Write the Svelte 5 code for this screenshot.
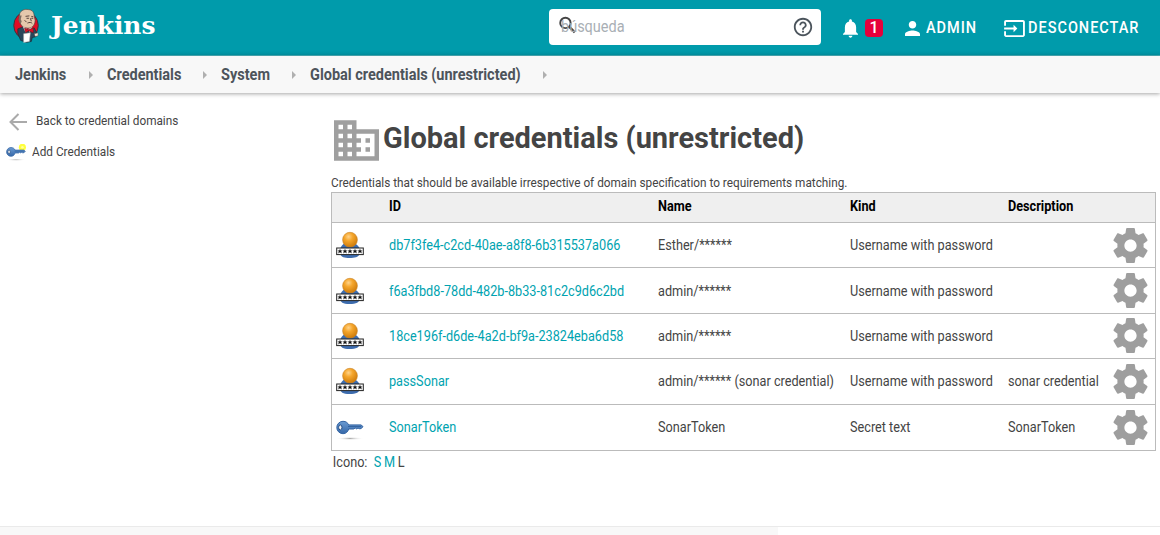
<script>
  const crumbs = [
    { label: 'Jenkins', width: 91.5 },
    { label: 'Credentials', width: 114.5 },
    { label: 'System', width: 89 },
    { label: 'Global credentials (unrestricted)', width: 245 }
  ];
  const rows = [
    { id: 'db7f3fe4-c2cd-40ae-a8f8-6b315537a066', name: 'Esther/******', kind: 'Username with password', description: '', icon: 'user' },
    { id: 'f6a3fbd8-78dd-482b-8b33-81c2c9d6c2bd', name: 'admin/******', kind: 'Username with password', description: '', icon: 'user' },
    { id: '18ce196f-d6de-4a2d-bf9a-23824eba6d58', name: 'admin/******', kind: 'Username with password', description: '', icon: 'user' },
    { id: 'passSonar', name: 'admin/****** (sonar credential)', kind: 'Username with password', description: 'sonar credential', icon: 'user' },
    { id: 'SonarToken', name: 'SonarToken', kind: 'Secret text', description: 'SonarToken', icon: 'key' }
  ];
</script>

{#snippet key(fresh)}
  <svg class="key" class:small={fresh} viewBox="0 0 28 24">
    <defs>
      <linearGradient id="keyfill" x2="0" y2="1"><stop stop-color="#6b9bd2" /><stop offset="1" stop-color="#3567a8" /></linearGradient>
      <radialGradient id="keyshade"><stop stop-color="#aaa" /><stop offset="1" stop-color="#fff" stop-opacity="0" /></radialGradient>
    </defs>
    <ellipse cx="14" cy="21.5" rx="14" ry="1.7" fill="url(#keyshade)" />
    {#if fresh}<circle cx="23" cy="4" r="5" fill="#ffff3d" /><circle cx="23" cy="4" r="1.8" fill="#ffffa0" />{/if}
    <path d="M7 4.3c3 0 4.8 1.5 5.7 3.6H25l2 1.7-1.8 2-2 .1-1.2-.7-1.3.9-1.5-.9-1.5 1h-5C12 14.700 10 16.700 7 16.700A6.200 6.200 0 0 1 7 4.300z" fill="url(#keyfill)" stroke="#3465a4" />
    <path d="M12 9.500h13" stroke="#3464a0" />
    <ellipse cx="4.300" cy="10.400" rx="1.700" ry="2.500" fill="#f5f5f5" stroke="#285086" />
  </svg>
{/snippet}

<header>
  <div class="brand">
    <svg class="butler" viewBox="0 0 28 36">
      <ellipse cx="13.500" cy="17.500" rx="12.700" ry="14" fill="#e10d25" stroke="#303944" />
      <path d="M5 21l5-2 6 3 6-2 2 4v5l-4 1-1 4-5 1-6-2-3-7z" fill="#29465a" stroke="#1d2b35" stroke-width=".7" />
      <path d="M7 5c1-3 5-5 9-4 4 0 6 3 6 7l1 4c0 4-2 7-5 8-4 1-9-1-10-4L6 12z" fill="#e5c8ac" stroke="#4b4541" stroke-width=".7" />
      <path d="M7 7c-2 3-1 7 1 9l1-3-1-2 1-4z" fill="#7c6c60" />
      <path d="M13 8l4-.5M19 8l2 .5M14 10h2.500M19 10h2M18 10l1 3M15 15c2-1 4-1 5 .5M12 12l2 2" fill="none" stroke="#533f38" />
      <path d="M10 18l5 3-2 4zM20 19l-4 2 1 4z" fill="#e8e0da" />
      <path d="M12 20l4 2 5-2v5l-5-2-3 2z" fill="#e10d25" stroke="#701520" stroke-width=".6" />
      <path d="M11 26l7-1-1 9-6 1z" fill="#fff" stroke="#aaa" stroke-width=".5" />
      <path d="M22 26l4-1v3l-3 1z" fill="#f4e6dc" stroke="#50443d" stroke-width=".5" />
    </svg>
    <span class="wordmark">Jenkins</span>
  </div>
  <div class="search">
    <span class="placeholder narrow">búsqueda</span>
    <svg class="lens" viewBox="0 0 18 18"><circle cx="6.800" cy="6.800" r="5.500" fill="none" stroke="#444" stroke-width="2" /><path d="M10.700 10.700l6 6" stroke="#444" stroke-width="2.600" /></svg>
    <svg class="help" viewBox="0 0 24 24"><path fill="#4b545c" d="M11 18h2v-2h-2v2zm1-16C6.480 2 2 6.480 2 12s4.480 10 10 10 10-4.480 10-10S17.520 2 12 2zm0 18c-4.410 0-8-3.590-8-8s3.590-8 8-8 8 3.590 8 8-3.590 8-8 8zm0-14c-2.210 0-4 1.790-4 4h2c0-1.100.9-2 2-2s2 .9 2 2c0 2-3 1.750-3 5h2c0-2.250 3-2.500 3-5 0-2.210-1.790-4-4-4z" /></svg>
  </div>
  <svg class="bell" viewBox="4 2.500 16 19.500"><path fill="#fff" d="M12 22c1.100 0 2-.9 2-2h-4c0 1.100.9 2 2 2zm6-6v-5c0-3.070-1.640-5.640-4.500-6.320V4c0-.83-.67-1.500-1.500-1.500s-1.500.67-1.500 1.500v.68C7.630 5.360 6 7.920 6 11v5l-2 2v1h16v-1l-2-2z" /></svg>
  <span class="badge">1</span>
  <svg class="person" viewBox="4 4 16 16"><path fill="#fff" d="M12 12c2.210 0 4-1.790 4-4s-1.790-4-4-4-4 1.790-4 4 1.790 4 4 4zm0 2c-2.670 0-8 1.340-8 4v2h16v-2c0-2.660-5.330-4-8-4z" /></svg>
  <span class="admin narrow">ADMIN</span>
  <svg class="exit" viewBox="1 3 22 18"><path fill="#fff" d="M21 3.010H3c-1.100 0-2 .9-2 2V9h2V4.990h18v14.030H3V15H1v4.010c0 1.100.9 1.980 2 1.980h18c1.100 0 2-.88 2-1.980v-14c0-1.110-.9-2-2-2zM11 16l4-4-4-4v3H1v2h10v3z" /></svg>
  <span class="logout narrow">DESCONECTAR</span>
</header>

<nav>
  {#each crumbs as crumb, i}
    <span class="crumb" style:width="{crumb.width}px"><span class="narrow">{crumb.label}</span>{#if i < 3}<i></i>{/if}</span>
  {/each}
  <i></i>
</nav>

<div class="body">
  <aside>
    <a class="back" href="#back"><svg viewBox="0 0 18 18"><path d="M18 9H2M9.500 1L1.500 9l8 8" fill="none" stroke="#aaa" stroke-width="2" /></svg><span class="narrow">Back to credential domains</span></a>
    <a class="add" href="#add">{@render key(true)}<span class="narrow">Add Credentials</span></a>
  </aside>
  <main>
    <h1>
      <svg viewBox="2 3 20 18"><path fill="#9f9f9f" d="M12 7V3H2v18h20V7H12zM6 19H4v-2h2v2zm0-4H4v-2h2v2zm0-4H4V9h2v2zm0-4H4V5h2v2zm4 12H8v-2h2v2zm0-4H8v-2h2v2zm0-4H8V9h2v2zm0-4H8V5h2v2zm10 12h-8v-2h2v-2h-2v-2h2v-2h-2V9h8v10zm-2-8h-2v2h2v-2zm0 4h-2v2h2v-2z" /></svg>
      <span>Global credentials (unrestricted)</span>
    </h1>
    <p class="narrow">Credentials that should be available irrespective of domain specification to requirements matching.</p>
    <div class="table">
      <div class="row head"><span></span><span>ID</span><span>Name</span><span>Kind</span><span>Description</span><span></span></div>
      {#each rows as row}
        <div class="row">
          {#if row.icon === 'user'}
            <svg class="user" viewBox="0 0 28 28">
              <defs><radialGradient id="headfill" cx=".4" cy=".3" r=".7"><stop stop-color="#ffd38a" /><stop offset=".4" stop-color="#f5a62c" /><stop offset="1" stop-color="#cf7c0b" /></radialGradient></defs>
              <path d="M4 20c0-5 4-9 9.500-9S24 15 24 20c0 6-4 7-10.500 7S4 26 4 20z" fill="#3d6cae" />
              <circle cx="14" cy="8.700" r="7.400" fill="url(#headfill)" stroke="#c98325" stroke-width=".6" />
              <rect x=".7" y="17" width="26.600" height="6.600" fill="#fff" stroke="#222" />
              {#each [4, 9, 14, 19, 24] as x}<path d="M{x} 17.800l.7 1.600h1.800l-1.300 1.100.6 1.900-1.800-1.100-1.800 1.100.6-1.900-1.300-1.100h1.800z" fill="#111" />{/each}
            </svg>
          {:else}{@render key(false)}{/if}
          <a href="#credential">{row.id}</a><span>{row.name}</span><span>{row.kind}</span><span>{row.description}</span>
          <svg class="gear" viewBox="2 2 20 20"><path fill="#9e9e9e" d="M19.430 12.980c.04-.32.070-.64.070-.98s-.03-.66-.07-.98l2.110-1.650c.19-.15.24-.42.120-.64l-2-3.460c-.12-.22-.39-.3-.61-.22l-2.490 1c-.52-.4-1.080-.73-1.690-.98l-.38-2.650C14.460 2.180 14.250 2 14 2h-4c-.25 0-.46.180-.49.420l-.38 2.650c-.61.250-1.170.590-1.690.980l-2.490-1c-.23-.09-.49 0-.61.220l-2 3.460c-.13.220-.07.490.120.640l2.110 1.650c-.04.320-.07.650-.07.980s.03.660.070.980l-2.110 1.650c-.19.150-.24.420-.12.640l2 3.460c.12.220.39.300.61.220l2.490-1c.52.400 1.080.730 1.690.980l.38 2.650c.03.240.24.420.490.420h4c.25 0 .46-.18.490-.42l.38-2.650c.61-.25 1.170-.59 1.690-.98l2.490 1c.23.090.49 0 .61-.22l2-3.460c.12-.22.070-.49-.12-.64l-2.110-1.650zM12 15.500c-1.930 0-3.500-1.570-3.500-3.500s1.570-3.500 3.500-3.500 3.500 1.570 3.500 3.500-1.570 3.500-3.500 3.500z" /></svg>
        </div>
      {/each}
    </div>
    <div class="sizes narrow"><span>Icono:</span> <a href="#s">S</a><a href="#m">M</a><span>L</span></div>
  </main>
</div>
<footer><div></div></footer>

<style>
  :global(body) { background: #fff; overflow: hidden; }
  :global(#app) { display: flex; flex-direction: column; height: 535px; font-family: Roboto, sans-serif; color: #444; }
  svg { display: block; flex: none; }
  a { text-decoration: none; color: #00a3b0; }
  .narrow, .row > span, .row > a { transform: scaleX(.906); transform-origin: left; }
  header { height: 56px; box-sizing: border-box; flex: none; display: flex; align-items: center; background: linear-gradient(#009bab 50px, #0092a2); color: #fff; border-bottom: 1px solid #4aaeb8; white-space: nowrap; }
  .brand { display: flex; align-items: center; width: 549px; padding-left: 13px; box-sizing: border-box; }
  .butler { width: 27px; height: 36px; margin-top: -4px; }
  .wordmark { font: bold 25px/36px "DejaVu Serif", serif; margin: -3px 0 0 11px; transform: scaleX(.995); transform-origin: left; }
  .search { display: grid; grid-template-columns: 10px 20px 1fr 24px 6px; width: 272px; height: 36px; margin-top: -2px; align-items: center; background: #fff; border-radius: 4px; }
  .placeholder { grid-area: 1 / 2 / 2 / 4; color: #a9afb5; font-size: 16px; margin-left: 2px; }
  .lens { grid-area: 1 / 2; width: 17px; height: 18px; margin-top: -3px; }
  .help { grid-area: 1 / 4; width: 22px; height: 22px; margin-left: 1px; }
  .bell { width: 15px; height: 19px; margin: 1px 0 0 22px; }
  .badge { width: 18px; height: 18px; margin: 1px 0 0 7px; border-radius: 4px; background: #e6003b; text-align: center; font: 500 16px/18px Roboto, sans-serif; }
  .person { width: 15px; height: 15px; margin: 2px 0 0 22px; }
  .admin, .logout { font-weight: 500; font-size: 16px; letter-spacing: 1.100px; }
  .admin { width: 71px; margin-left: 6px; }
  .exit { width: 21px; height: 17px; margin: 2px 0 0 7px; }
  .logout { margin-left: 3px; }
  nav { height: 37px; flex: none; display: flex; align-items: center; padding-left: 15px; background: #f8f8f8; box-shadow: 0 1px 4px rgba(0,0,0,.35); font-size: 16px; font-weight: 700; color: #4d545b; white-space: nowrap; }
  .crumb { display: flex; align-items: center; justify-content: space-between; flex: none; box-sizing: border-box; padding-right: 13px; }
  .crumb > span { width: 0; }
  nav i { width: 0; height: 0; margin-right: 1px; border: 4px solid transparent; border-right: 0; border-left-color: #b0b0b0; }
  nav > i { margin-left: -12px; }
  .body { display: flex; height: 433px; }
  aside { width: 331px; flex: none; font-size: 13px; }
  aside a { color: #444; display: flex; align-items: center; height: 31px; }
  .back { padding: 12px 0 0 9px; gap: 9px; }
  .back svg { width: 18px; height: 18px; margin-top: 2px; }
  .add { padding-left: 6px; gap: 6px; }
  .key { width: 28px; height: 24px; }
  .key.small { width: 20px; height: 18px; margin-top: 2px; }
  main { width: 825px; }
  h1 { display: flex; align-items: center; margin: 25px 0 0; height: 43px; font-size: 30px; font-weight: 700; }
  h1 svg { width: 45px; height: 41px; margin: 1px 4px 0 3px; }
  h1 span { white-space: nowrap; margin-top: -4px; transform: scaleX(.966); transform-origin: left; }
  p { margin: 13px 0 0; height: 18px; line-height: 18px; font-size: 13px; white-space: nowrap; }
  .table { box-sizing: border-box; height: 259px; border: 1px solid #bbb; font-size: 14px; display: grid; grid-template-rows: 30px repeat(5, 1fr); }
  .row { display: grid; grid-template-columns: 56.500px 269.500px 192px 157.500px 105px 36px; align-items: center; white-space: nowrap; box-sizing: border-box; border-bottom: 1px solid #bbb; }
  .row:last-child { border-bottom: 0; }
  .head { background: #efefef; font-weight: 700; color: #000; }
  .head > span { margin-top: -3px; }
  .row > span, .row > a { justify-self: start; }
  .user { width: 28px; height: 28px; margin-left: 4px; }
  .row .key { margin-left: 4px; margin-top: 3px; }
  .gear { width: 35px; height: 35px; }
  .sizes { display: flex; padding-left: 2px; margin-top: -1px; line-height: 24px; font-size: 14px; gap: 3px; }
  .sizes > span:first-child { margin-right: 4px; }
  footer { height: 9px; box-sizing: border-box; flex: none; border-top: 1px solid #eaeaea; }
  footer div { width: 778px; height: 8px; background: #f8f8f8; }
</style>
